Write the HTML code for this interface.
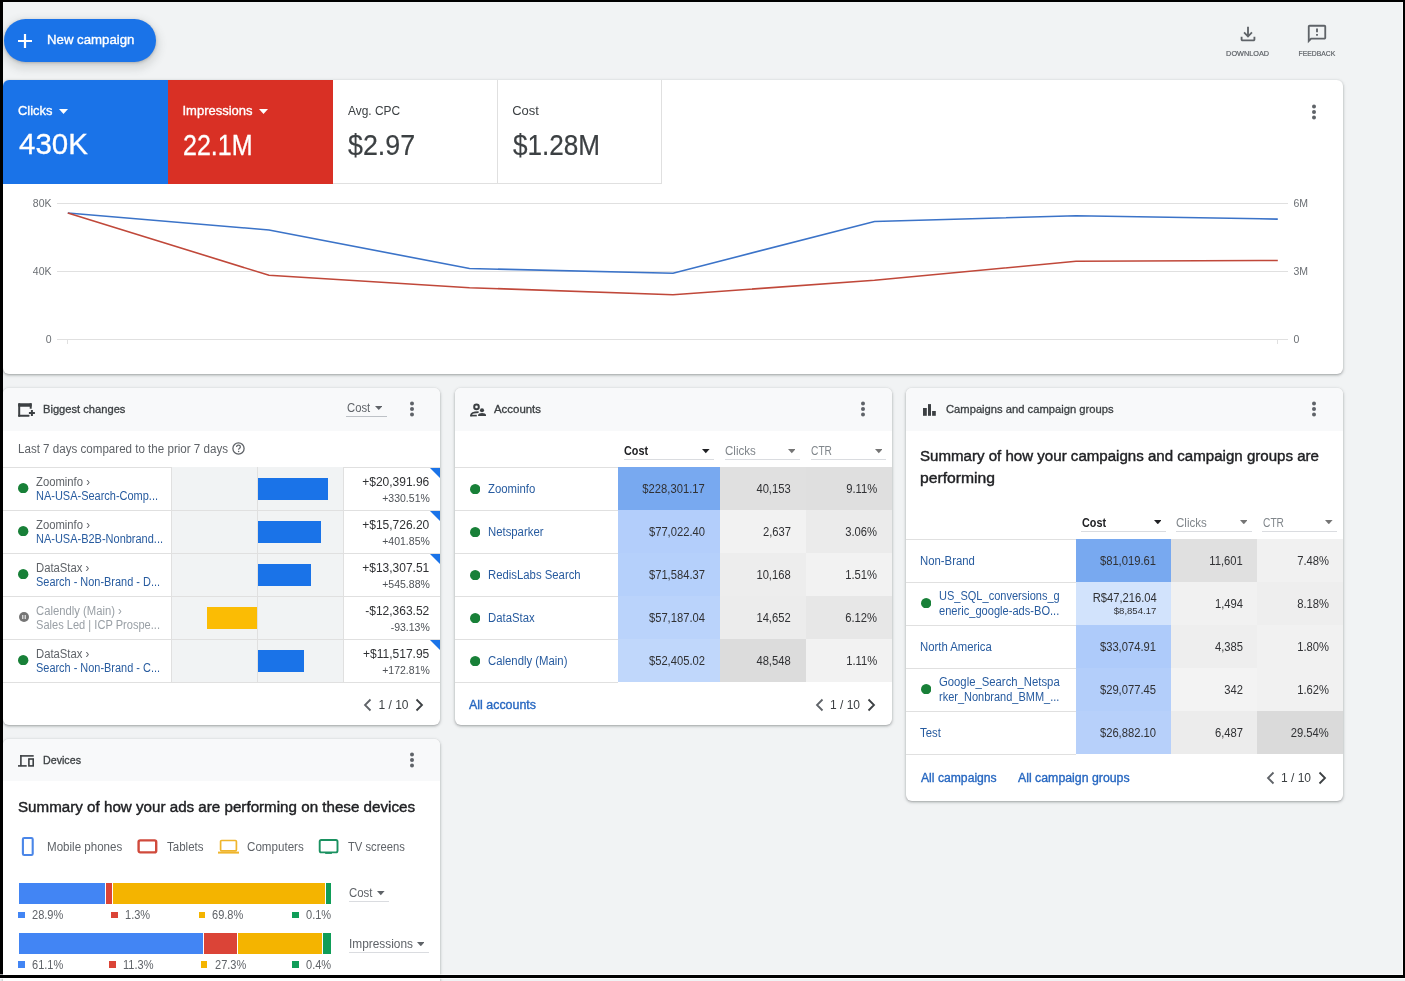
<!DOCTYPE html>
<html><head><meta charset="utf-8"><title>Overview</title>
<style>
html,body{margin:0;padding:0;}
body{width:1405px;height:981px;position:relative;overflow:hidden;background:#f1f3f4;font-family:"Liberation Sans",sans-serif;}
.t{position:absolute;white-space:nowrap;line-height:1.117;}
.b{position:absolute;}
</style></head><body><div style="position:absolute;left:0;top:0;width:1405px;height:981px;will-change:transform;">
<div class="b" style="left:4.00px;top:19.00px;width:152.00px;height:43.00px;background:#1a73e8;border-radius:22px;box-shadow:0 1px 3px 0 rgba(60,64,67,.3),0 4px 8px 3px rgba(60,64,67,.15);"></div>
<svg class="b" style="left:17.00px;top:33.00px" width="16" height="16" viewBox="0 0 16 16"><path d="M8 1v14M1 8h14" stroke="#fff" stroke-width="2.2" fill="none"/></svg>
<div class="t" style="top:33.03px;font-size:13.00px;color:#fff;font-weight:normal;-webkit-text-stroke:0.35px #fff;left:46.60px;transform:scaleX(1.0164);transform-origin:left;">New campaign</div>
<svg class="b" style="left:1236.80px;top:23.40px" width="22" height="22" viewBox="0 0 24 24"><path d="M18 15v3H6v-3H4v3c0 1.1.9 2 2 2h12c1.1 0 2-.9 2-2v-3h-2zm-1-4l-1.41-1.41L13 12.17V4h-2v8.17L8.41 9.59 7 11l5 5 5-5z" fill="#5f6368"/></svg>
<div class="t" style="top:50.46px;font-size:7.00px;color:#5f6368;font-weight:normal;-webkit-text-stroke:0.19px #5f6368;left:1226.89px;transform:scaleX(1.0431);transform-origin:center;">DOWNLOAD</div>
<svg class="b" style="left:1306.00px;top:23.00px" width="22" height="22" viewBox="0 0 24 24"><path d="M20 2H4c-1.1 0-1.99.9-1.99 2L2 22l4-4h14c1.1 0 2-.9 2-2V4c0-1.1-.9-2-2-2zm0 14H5.17L4 17.17V4h16v12zM11 12h2v2h-2zm0-6h2v4h-2z" fill="#5f6368"/></svg>
<div class="t" style="top:50.46px;font-size:7.00px;color:#5f6368;font-weight:normal;-webkit-text-stroke:0.19px #5f6368;left:1298.13px;transform:scaleX(0.9700);transform-origin:center;">FEEDBACK</div>
<div class="b" style="left:3.00px;top:80.00px;width:1340.00px;height:294.00px;background:#fff;border-radius:6px;box-shadow:0 1px 2px 0 rgba(60,64,67,.3),0 1px 3px 1px rgba(60,64,67,.15);"></div>
<div class="b" style="left:3.00px;top:80.00px;width:165.00px;height:104.00px;background:#1a73e8;border-top-left-radius:6px;"></div>
<div class="b" style="left:168.00px;top:80.00px;width:165.00px;height:104.00px;background:#d93025;"></div>
<div class="b" style="left:333.00px;top:80.00px;width:165.00px;height:104.00px;border-right:1px solid #e0e0e0;border-bottom:1px solid #e0e0e0;box-sizing:border-box;"></div>
<div class="b" style="left:497.00px;top:80.00px;width:165.00px;height:104.00px;border-right:1px solid #e0e0e0;border-bottom:1px solid #e0e0e0;box-sizing:border-box;"></div>
<div class="t" style="top:104.13px;font-size:13.00px;color:#fff;font-weight:normal;-webkit-text-stroke:0.35px #fff;left:17.90px;transform:scaleX(0.9923);transform-origin:left;">Clicks</div>
<svg class="b" style="left:59.00px;top:108.50px" width="9" height="5" viewBox="0 0 9 5"><path d="M0 0h9L4.5 5z" fill="#fff"/></svg>
<div class="t" style="top:128.46px;font-size:29.00px;color:#fff;font-weight:normal;left:19.00px;transform:scaleX(1.0158);transform-origin:left;-webkit-text-stroke:0.3px #fff;">430K</div>
<div class="t" style="top:104.13px;font-size:13.00px;color:#fff;font-weight:normal;-webkit-text-stroke:0.35px #fff;left:182.50px;">Impressions</div>
<svg class="b" style="left:259.00px;top:108.50px" width="9" height="5" viewBox="0 0 9 5"><path d="M0 0h9L4.5 5z" fill="#fff"/></svg>
<div class="t" style="top:128.66px;font-size:29.00px;color:#fff;font-weight:normal;left:182.90px;transform:scaleX(0.8635);transform-origin:left;-webkit-text-stroke:0.3px #fff;">22.1M</div>
<div class="t" style="top:104.23px;font-size:13.00px;color:#3c4043;font-weight:normal;left:347.70px;transform:scaleX(0.9184);transform-origin:left;">Avg. CPC</div>
<div class="t" style="top:128.66px;font-size:29.00px;color:#3c4043;font-weight:normal;left:347.70px;transform:scaleX(0.9246);transform-origin:left;-webkit-text-stroke:0.2px #3c4043;">$2.97</div>
<div class="t" style="top:104.23px;font-size:13.00px;color:#3c4043;font-weight:normal;left:512.20px;">Cost</div>
<div class="t" style="top:128.66px;font-size:29.00px;color:#3c4043;font-weight:normal;left:512.70px;transform:scaleX(0.9004);transform-origin:left;-webkit-text-stroke:0.2px #3c4043;">$1.28M</div>
<svg class="b" style="left:1311.00px;top:103.00px" width="6" height="18" viewBox="0 0 6 18"><circle cx="3" cy="3.6" r="2" fill="#5f6368"/><circle cx="3" cy="9" r="2" fill="#5f6368"/><circle cx="3" cy="14.4" r="2" fill="#5f6368"/></svg>
<div class="b" style="left:57.00px;top:203.00px;width:1231.00px;height:1.00px;background:#e0e0e0;"></div>
<div class="b" style="left:57.00px;top:271.00px;width:1231.00px;height:1.00px;background:#e0e0e0;"></div>
<div class="b" style="left:57.00px;top:339.00px;width:1231.00px;height:1.00px;background:#e0e0e0;"></div>
<div class="b" style="left:67.00px;top:339.00px;width:1.00px;height:5.00px;background:#e0e0e0;"></div>
<div class="b" style="left:1277.00px;top:339.00px;width:1.00px;height:5.00px;background:#e0e0e0;"></div>
<div class="t" style="top:198.10px;font-size:10.50px;color:#6b6f74;font-weight:normal;left:32.82px;">80K</div>
<div class="t" style="top:266.10px;font-size:10.50px;color:#6b6f74;font-weight:normal;left:32.82px;">40K</div>
<div class="t" style="top:334.10px;font-size:10.50px;color:#6b6f74;font-weight:normal;left:45.66px;">0</div>
<div class="t" style="top:198.10px;font-size:10.50px;color:#6b6f74;font-weight:normal;left:1293.50px;">6M</div>
<div class="t" style="top:266.10px;font-size:10.50px;color:#6b6f74;font-weight:normal;left:1293.50px;">3M</div>
<div class="t" style="top:334.10px;font-size:10.50px;color:#6b6f74;font-weight:normal;left:1293.50px;">0</div>
<svg class="b" style="left:0.00px;top:0.00px" width="1405" height="400" viewBox="0 0 1405 400"><polyline points="67.8,213.0 269.0,230.0 469.5,268.5 673.0,273.2 874.5,221.5 1076.0,215.7 1277.8,219.1" fill="none" stroke="#3b73c8" stroke-width="1.6"/><polyline points="67.8,212.9 269.0,275.3 469.5,287.7 673.0,294.7 874.5,280.3 1076.0,261.2 1277.8,260.5" fill="none" stroke="#c0483a" stroke-width="1.6"/></svg>
<div class="b" style="left:3.00px;top:388.00px;width:437.00px;height:336.60px;background:#fff;border-radius:6px;box-shadow:0 1px 2px 0 rgba(60,64,67,.3),0 1px 3px 1px rgba(60,64,67,.15);"></div>
<div class="b" style="left:3.00px;top:388.00px;width:437.00px;height:42.60px;background:#f8f9fa;border-top-left-radius:6px;border-top-right-radius:6px;"></div>
<svg class="b" style="left:17.00px;top:402.00px" width="20" height="18" viewBox="0 0 20 18"><g fill="#3c4043"><rect x="1.2" y="1.2" width="13.5" height="3.5" rx=".8"/><rect x="1.2" y="1.2" width="2" height="13.5" rx=".6"/><rect x="1.2" y="12.7" width="11.3" height="2" rx=".6"/><rect x="12.7" y="1.2" width="2" height="5.5"/><rect x="11.9" y="10" width="6" height="2"/><rect x="13.9" y="8" width="2" height="6"/></g></svg>
<div class="t" style="top:403.05px;font-size:11.00px;color:#3c4043;font-weight:normal;-webkit-text-stroke:0.30px #3c4043;left:43.40px;transform:scaleX(1.0131);transform-origin:left;">Biggest changes</div>
<div class="t" style="top:401.64px;font-size:12.00px;color:#5f6368;font-weight:normal;left:346.70px;transform:scaleX(0.9403);transform-origin:left;">Cost</div>
<svg class="b" style="left:374.50px;top:406.00px" width="7.5" height="4" viewBox="0 0 7.5 4"><path d="M0 0h7.5 L3.75 4z" fill="#5f6368"/></svg>
<div class="b" style="left:346.00px;top:416.00px;width:41.00px;height:1.00px;background:#bdc1c6;"></div>
<svg class="b" style="left:409.00px;top:400.20px" width="6" height="18" viewBox="0 0 6 18"><circle cx="3" cy="3.6" r="2" fill="#5f6368"/><circle cx="3" cy="9" r="2" fill="#5f6368"/><circle cx="3" cy="14.4" r="2" fill="#5f6368"/></svg>
<div class="t" style="top:442.54px;font-size:12.00px;color:#5f6368;font-weight:normal;left:17.60px;transform:scaleX(0.9657);transform-origin:left;">Last 7 days compared to the prior 7 days</div>
<svg class="b" style="left:232.00px;top:441.50px" width="13" height="13" viewBox="0 0 13 13"><circle cx="6.5" cy="6.5" r="5.6" stroke="#5f6368" stroke-width="1.3" fill="none"/><path d="M4.6 5.1c0-1.1.9-1.9 1.9-1.9s1.9.8 1.9 1.8c0 1.3-1.8 1.3-1.8 2.7" stroke="#5f6368" stroke-width="1.2" fill="none"/><circle cx="6.6" cy="9.6" r=".75" fill="#5f6368"/></svg>
<div class="b" style="left:3.00px;top:466.60px;width:437.00px;height:1.00px;background:#e0e0e0;"></div>
<div class="b" style="left:171.00px;top:467.00px;width:172.00px;height:215.00px;background:#f1f3f4;"></div>
<div class="b" style="left:3.00px;top:510.00px;width:437.00px;height:1.00px;background:#e0e0e0;"></div>
<div class="b" style="left:3.00px;top:553.00px;width:437.00px;height:1.00px;background:#e0e0e0;"></div>
<div class="b" style="left:3.00px;top:596.00px;width:437.00px;height:1.00px;background:#e0e0e0;"></div>
<div class="b" style="left:3.00px;top:639.00px;width:437.00px;height:1.00px;background:#e0e0e0;"></div>
<div class="b" style="left:3.00px;top:682.00px;width:437.00px;height:1.00px;background:#e0e0e0;"></div>
<svg class="b" style="left:18.40px;top:483.00px" width="10.4" height="10.4" viewBox="0 0 10.4 10.4"><circle cx="5.2" cy="5.2" r="5.2" fill="#188038"/></svg>
<div class="t" style="top:475.74px;font-size:12.00px;color:#5f6368;font-weight:normal;left:35.70px;transform:scaleX(0.9400);transform-origin:left;">Zoominfo ›</div>
<div class="t" style="top:489.94px;font-size:12.00px;color:#275b9f;font-weight:normal;left:35.70px;transform:scaleX(0.9147);transform-origin:left;">NA-USA-Search-Comp...</div>
<svg class="b" style="left:430.00px;top:468.00px" width="10" height="10" viewBox="0 0 10 10"><path d="M0 0h10v10z" fill="#1a73e8"/></svg>
<div class="b" style="left:258.00px;top:478.00px;width:70.00px;height:22.00px;background:#1a73e8;"></div>
<div class="t" style="top:475.94px;font-size:12.00px;color:#303134;font-weight:normal;left:362.23px;">+$20,391.96</div>
<div class="t" style="top:493.30px;font-size:10.50px;color:#4d5156;font-weight:normal;left:382.22px;">+330.51%</div>
<svg class="b" style="left:18.40px;top:526.00px" width="10.4" height="10.4" viewBox="0 0 10.4 10.4"><circle cx="5.2" cy="5.2" r="5.2" fill="#188038"/></svg>
<div class="t" style="top:518.74px;font-size:12.00px;color:#5f6368;font-weight:normal;left:35.70px;transform:scaleX(0.9400);transform-origin:left;">Zoominfo ›</div>
<div class="t" style="top:532.94px;font-size:12.00px;color:#275b9f;font-weight:normal;left:35.70px;transform:scaleX(0.9155);transform-origin:left;">NA-USA-B2B-Nonbrand...</div>
<svg class="b" style="left:430.00px;top:511.00px" width="10" height="10" viewBox="0 0 10 10"><path d="M0 0h10v10z" fill="#1a73e8"/></svg>
<div class="b" style="left:258.00px;top:521.00px;width:63.00px;height:22.00px;background:#1a73e8;"></div>
<div class="t" style="top:518.94px;font-size:12.00px;color:#303134;font-weight:normal;left:362.23px;">+$15,726.20</div>
<div class="t" style="top:536.30px;font-size:10.50px;color:#4d5156;font-weight:normal;left:382.22px;">+401.85%</div>
<svg class="b" style="left:18.40px;top:569.00px" width="10.4" height="10.4" viewBox="0 0 10.4 10.4"><circle cx="5.2" cy="5.2" r="5.2" fill="#188038"/></svg>
<div class="t" style="top:561.74px;font-size:12.00px;color:#5f6368;font-weight:normal;left:35.70px;transform:scaleX(0.9400);transform-origin:left;">DataStax ›</div>
<div class="t" style="top:575.94px;font-size:12.00px;color:#275b9f;font-weight:normal;left:35.70px;transform:scaleX(0.9114);transform-origin:left;">Search - Non-Brand - D...</div>
<svg class="b" style="left:430.00px;top:554.00px" width="10" height="10" viewBox="0 0 10 10"><path d="M0 0h10v10z" fill="#1a73e8"/></svg>
<div class="b" style="left:258.00px;top:564.00px;width:53.00px;height:22.00px;background:#1a73e8;"></div>
<div class="t" style="top:561.94px;font-size:12.00px;color:#303134;font-weight:normal;left:362.23px;">+$13,307.51</div>
<div class="t" style="top:579.30px;font-size:10.50px;color:#4d5156;font-weight:normal;left:382.22px;">+545.88%</div>
<svg class="b" style="left:18.50px;top:612.20px" width="10" height="10" viewBox="0 0 10 10"><circle cx="5" cy="5" r="5" fill="#757575"/><path d="M3.8 3v4M6.2 3v4" stroke="#fff" stroke-width="1"/></svg>
<div class="t" style="top:604.74px;font-size:12.00px;color:#9aa0a6;font-weight:normal;left:35.70px;transform:scaleX(0.9400);transform-origin:left;">Calendly (Main) ›</div>
<div class="t" style="top:618.94px;font-size:12.00px;color:#9aa0a6;font-weight:normal;left:35.70px;transform:scaleX(0.9233);transform-origin:left;">Sales Led | ICP Prospe...</div>
<div class="b" style="left:207.00px;top:607.00px;width:50.00px;height:22.00px;background:#fbbc04;"></div>
<div class="t" style="top:604.94px;font-size:12.00px;color:#303134;font-weight:normal;left:365.24px;">-$12,363.52</div>
<div class="t" style="top:622.30px;font-size:10.50px;color:#4d5156;font-weight:normal;left:390.69px;">-93.13%</div>
<svg class="b" style="left:18.40px;top:655.00px" width="10.4" height="10.4" viewBox="0 0 10.4 10.4"><circle cx="5.2" cy="5.2" r="5.2" fill="#188038"/></svg>
<div class="t" style="top:647.74px;font-size:12.00px;color:#5f6368;font-weight:normal;left:35.70px;transform:scaleX(0.9400);transform-origin:left;">DataStax ›</div>
<div class="t" style="top:661.94px;font-size:12.00px;color:#275b9f;font-weight:normal;left:35.70px;transform:scaleX(0.9114);transform-origin:left;">Search - Non-Brand - C...</div>
<svg class="b" style="left:430.00px;top:640.00px" width="10" height="10" viewBox="0 0 10 10"><path d="M0 0h10v10z" fill="#1a73e8"/></svg>
<div class="b" style="left:258.00px;top:650.00px;width:46.00px;height:22.00px;background:#1a73e8;"></div>
<div class="t" style="top:647.94px;font-size:12.00px;color:#303134;font-weight:normal;left:363.12px;">+$11,517.95</div>
<div class="t" style="top:665.30px;font-size:10.50px;color:#4d5156;font-weight:normal;left:382.22px;">+172.81%</div>
<div class="b" style="left:171.00px;top:467.00px;width:1.00px;height:215.00px;background:#e0e0e0;"></div>
<div class="b" style="left:257.00px;top:467.00px;width:1.00px;height:215.00px;background:#e0e0e0;"></div>
<div class="b" style="left:343.00px;top:467.00px;width:1.00px;height:215.00px;background:#e0e0e0;"></div>
<svg class="b" style="left:362.00px;top:698.00px" width="12" height="14" viewBox="0 0 12 14"><path d="M8.5 1.5L3 7l5.5 5.5" stroke="#5f6368" stroke-width="1.8" fill="none"/></svg>
<div class="t" style="top:699.24px;font-size:12.00px;color:#3c4043;font-weight:normal;left:378.50px;">1 / 10</div>
<svg class="b" style="left:413.00px;top:698.00px" width="12" height="14" viewBox="0 0 12 14"><path d="M3.5 1.5L9 7l-5.5 5.5" stroke="#3c4043" stroke-width="1.8" fill="none"/></svg>
<div class="b" style="left:455.00px;top:388.00px;width:437.00px;height:336.60px;background:#fff;border-radius:6px;box-shadow:0 1px 2px 0 rgba(60,64,67,.3),0 1px 3px 1px rgba(60,64,67,.15);"></div>
<div class="b" style="left:455.00px;top:388.00px;width:437.00px;height:42.60px;background:#f8f9fa;border-top-left-radius:6px;border-top-right-radius:6px;"></div>
<svg class="b" style="left:468.00px;top:401.00px" width="20" height="18" viewBox="0 0 20 18"><circle cx="8.5" cy="5.9" r="2.3" stroke="#3c4043" stroke-width="2" fill="none"/><path d="M3.2 15.3v-1.3c0-1.8 3.3-2.9 7.4-2.9" stroke="#3c4043" stroke-width="1.9" fill="none"/><path d="M2.2 14.6h6.6" stroke="#3c4043" stroke-width="1.6"/><circle cx="14" cy="9.3" r="2.05" fill="#3c4043"/><path d="M10.1 14.9v-1c0-.9 1.9-1.8 3.95-1.8s3.95.9 3.95 1.8v1z" fill="#3c4043"/></svg>
<div class="t" style="top:403.05px;font-size:11.00px;color:#3c4043;font-weight:normal;-webkit-text-stroke:0.30px #3c4043;left:494.20px;transform:scaleX(1.0387);transform-origin:left;">Accounts</div>
<svg class="b" style="left:860.20px;top:400.20px" width="6" height="18" viewBox="0 0 6 18"><circle cx="3" cy="3.6" r="2" fill="#5f6368"/><circle cx="3" cy="9" r="2" fill="#5f6368"/><circle cx="3" cy="14.4" r="2" fill="#5f6368"/></svg>
<div class="t" style="top:445.29px;font-size:12.50px;color:#202124;font-weight:bold;left:624.00px;transform:scaleX(0.8640);transform-origin:left;">Cost</div>
<svg class="b" style="left:702.00px;top:449.40px" width="7.6" height="4.3" viewBox="0 0 7.6 4.3"><path d="M0 0h7.6 L3.8 4.3z" fill="#202124"/></svg>
<div class="b" style="left:624.00px;top:459.30px;width:89.60px;height:1.00px;background:#dadce0;"></div>
<div class="t" style="top:445.29px;font-size:12.50px;color:#80868b;font-weight:normal;left:725.20px;transform:scaleX(0.9240);transform-origin:left;">Clicks</div>
<svg class="b" style="left:787.80px;top:449.40px" width="7.6" height="4.3" viewBox="0 0 7.6 4.3"><path d="M0 0h7.6 L3.8 4.3z" fill="#757575"/></svg>
<div class="b" style="left:725.20px;top:459.30px;width:74.50px;height:1.00px;background:#dadce0;"></div>
<div class="t" style="top:445.29px;font-size:12.50px;color:#80868b;font-weight:normal;left:811.30px;transform:scaleX(0.8174);transform-origin:left;">CTR</div>
<svg class="b" style="left:874.50px;top:449.40px" width="7.6" height="4.3" viewBox="0 0 7.6 4.3"><path d="M0 0h7.6 L3.8 4.3z" fill="#757575"/></svg>
<div class="b" style="left:810.90px;top:459.30px;width:75.10px;height:1.00px;background:#dadce0;"></div>
<div class="b" style="left:455.00px;top:466.60px;width:437.00px;height:1.00px;background:#e0e0e0;"></div>
<div class="b" style="left:618.30px;top:467.00px;width:101.70px;height:43.00px;background:#78a9f0;"></div>
<div class="b" style="left:720.00px;top:467.00px;width:85.80px;height:43.00px;background:#e0e0e0;"></div>
<div class="b" style="left:805.80px;top:467.00px;width:86.20px;height:43.00px;background:#dfdfdf;"></div>
<div class="b" style="left:455.00px;top:510.00px;width:163.30px;height:1.00px;background:#e0e0e0;"></div>
<svg class="b" style="left:469.90px;top:483.80px" width="10.4" height="10.4" viewBox="0 0 10.4 10.4"><circle cx="5.2" cy="5.2" r="5.2" fill="#188038"/></svg>
<div class="t" style="top:482.84px;font-size:12.00px;color:#275b9f;font-weight:normal;left:487.90px;transform:scaleX(0.9450);transform-origin:left;">Zoominfo</div>
<div class="t" style="top:482.84px;font-size:12.00px;color:#303134;font-weight:normal;left:638.27px;transform:scaleX(0.9350);transform-origin:right;">$228,301.17</div>
<div class="t" style="top:482.84px;font-size:12.00px;color:#303134;font-weight:normal;left:754.30px;transform:scaleX(0.9350);transform-origin:right;">40,153</div>
<div class="t" style="top:482.84px;font-size:12.00px;color:#303134;font-weight:normal;left:843.87px;transform:scaleX(0.9350);transform-origin:right;">9.11%</div>
<div class="b" style="left:618.30px;top:510.00px;width:101.70px;height:43.00px;background:#b3cefb;"></div>
<div class="b" style="left:720.00px;top:510.00px;width:85.80px;height:43.00px;background:#f2f2f2;"></div>
<div class="b" style="left:805.80px;top:510.00px;width:86.20px;height:43.00px;background:#ebebeb;"></div>
<div class="b" style="left:455.00px;top:553.00px;width:163.30px;height:1.00px;background:#e0e0e0;"></div>
<svg class="b" style="left:469.90px;top:526.80px" width="10.4" height="10.4" viewBox="0 0 10.4 10.4"><circle cx="5.2" cy="5.2" r="5.2" fill="#188038"/></svg>
<div class="t" style="top:525.84px;font-size:12.00px;color:#275b9f;font-weight:normal;left:487.90px;transform:scaleX(0.9450);transform-origin:left;">Netsparker</div>
<div class="t" style="top:525.84px;font-size:12.00px;color:#303134;font-weight:normal;left:644.94px;transform:scaleX(0.9350);transform-origin:right;">$77,022.40</div>
<div class="t" style="top:525.84px;font-size:12.00px;color:#303134;font-weight:normal;left:760.97px;transform:scaleX(0.9350);transform-origin:right;">2,637</div>
<div class="t" style="top:525.84px;font-size:12.00px;color:#303134;font-weight:normal;left:842.97px;transform:scaleX(0.9350);transform-origin:right;">3.06%</div>
<div class="b" style="left:618.30px;top:553.00px;width:101.70px;height:43.00px;background:#b5d0fb;"></div>
<div class="b" style="left:720.00px;top:553.00px;width:85.80px;height:43.00px;background:#ededed;"></div>
<div class="b" style="left:805.80px;top:553.00px;width:86.20px;height:43.00px;background:#f2f2f2;"></div>
<div class="b" style="left:455.00px;top:596.00px;width:163.30px;height:1.00px;background:#e0e0e0;"></div>
<svg class="b" style="left:469.90px;top:569.80px" width="10.4" height="10.4" viewBox="0 0 10.4 10.4"><circle cx="5.2" cy="5.2" r="5.2" fill="#188038"/></svg>
<div class="t" style="top:568.84px;font-size:12.00px;color:#275b9f;font-weight:normal;left:487.90px;transform:scaleX(0.9450);transform-origin:left;">RedisLabs Search</div>
<div class="t" style="top:568.84px;font-size:12.00px;color:#303134;font-weight:normal;left:644.94px;transform:scaleX(0.9350);transform-origin:right;">$71,584.37</div>
<div class="t" style="top:568.84px;font-size:12.00px;color:#303134;font-weight:normal;left:754.30px;transform:scaleX(0.9350);transform-origin:right;">10,168</div>
<div class="t" style="top:568.84px;font-size:12.00px;color:#303134;font-weight:normal;left:842.97px;transform:scaleX(0.9350);transform-origin:right;">1.51%</div>
<div class="b" style="left:618.30px;top:596.00px;width:101.70px;height:43.00px;background:#bad3fb;"></div>
<div class="b" style="left:720.00px;top:596.00px;width:85.80px;height:43.00px;background:#ececec;"></div>
<div class="b" style="left:805.80px;top:596.00px;width:86.20px;height:43.00px;background:#e7e7e7;"></div>
<div class="b" style="left:455.00px;top:639.00px;width:163.30px;height:1.00px;background:#e0e0e0;"></div>
<svg class="b" style="left:469.90px;top:612.80px" width="10.4" height="10.4" viewBox="0 0 10.4 10.4"><circle cx="5.2" cy="5.2" r="5.2" fill="#188038"/></svg>
<div class="t" style="top:611.84px;font-size:12.00px;color:#275b9f;font-weight:normal;left:487.90px;transform:scaleX(0.9450);transform-origin:left;">DataStax</div>
<div class="t" style="top:611.84px;font-size:12.00px;color:#303134;font-weight:normal;left:644.94px;transform:scaleX(0.9350);transform-origin:right;">$57,187.04</div>
<div class="t" style="top:611.84px;font-size:12.00px;color:#303134;font-weight:normal;left:754.30px;transform:scaleX(0.9350);transform-origin:right;">14,652</div>
<div class="t" style="top:611.84px;font-size:12.00px;color:#303134;font-weight:normal;left:842.97px;transform:scaleX(0.9350);transform-origin:right;">6.12%</div>
<div class="b" style="left:618.30px;top:639.00px;width:101.70px;height:43.00px;background:#c0d7fb;"></div>
<div class="b" style="left:720.00px;top:639.00px;width:85.80px;height:43.00px;background:#dcdcdc;"></div>
<div class="b" style="left:805.80px;top:639.00px;width:86.20px;height:43.00px;background:#f2f2f2;"></div>
<div class="b" style="left:455.00px;top:682.00px;width:163.30px;height:1.00px;background:#e0e0e0;"></div>
<svg class="b" style="left:469.90px;top:655.80px" width="10.4" height="10.4" viewBox="0 0 10.4 10.4"><circle cx="5.2" cy="5.2" r="5.2" fill="#188038"/></svg>
<div class="t" style="top:654.84px;font-size:12.00px;color:#275b9f;font-weight:normal;left:487.90px;transform:scaleX(0.9450);transform-origin:left;">Calendly (Main)</div>
<div class="t" style="top:654.84px;font-size:12.00px;color:#303134;font-weight:normal;left:644.94px;transform:scaleX(0.9350);transform-origin:right;">$52,405.02</div>
<div class="t" style="top:654.84px;font-size:12.00px;color:#303134;font-weight:normal;left:754.30px;transform:scaleX(0.9350);transform-origin:right;">48,548</div>
<div class="t" style="top:654.84px;font-size:12.00px;color:#303134;font-weight:normal;left:843.87px;transform:scaleX(0.9350);transform-origin:right;">1.11%</div>
<div class="t" style="top:699.09px;font-size:12.50px;color:#2566c0;font-weight:normal;-webkit-text-stroke:0.34px #2566c0;left:469.20px;transform:scaleX(0.9941);transform-origin:left;">All accounts</div>
<svg class="b" style="left:813.50px;top:698.00px" width="12" height="14" viewBox="0 0 12 14"><path d="M8.5 1.5L3 7l5.5 5.5" stroke="#5f6368" stroke-width="1.8" fill="none"/></svg>
<div class="t" style="top:699.24px;font-size:12.00px;color:#3c4043;font-weight:normal;left:830.00px;">1 / 10</div>
<svg class="b" style="left:864.50px;top:698.00px" width="12" height="14" viewBox="0 0 12 14"><path d="M3.5 1.5L9 7l-5.5 5.5" stroke="#3c4043" stroke-width="1.8" fill="none"/></svg>
<div class="b" style="left:906.00px;top:388.00px;width:437.00px;height:412.70px;background:#fff;border-radius:6px;box-shadow:0 1px 2px 0 rgba(60,64,67,.3),0 1px 3px 1px rgba(60,64,67,.15);"></div>
<div class="b" style="left:906.00px;top:388.00px;width:437.00px;height:42.60px;background:#f8f9fa;border-top-left-radius:6px;border-top-right-radius:6px;"></div>
<svg class="b" style="left:920.00px;top:401.00px" width="20" height="18" viewBox="0 0 20 18"><g fill="#3c4043"><rect x="3" y="7" width="3.8" height="7.8"/><rect x="8" y="3.1" width="3" height="11.7"/><rect x="12.1" y="10" width="3.7" height="4.8"/></g></svg>
<div class="t" style="top:403.05px;font-size:11.00px;color:#3c4043;font-weight:normal;-webkit-text-stroke:0.30px #3c4043;left:945.50px;transform:scaleX(1.0183);transform-origin:left;">Campaigns and campaign groups</div>
<svg class="b" style="left:1311.00px;top:400.20px" width="6" height="18" viewBox="0 0 6 18"><circle cx="3" cy="3.6" r="2" fill="#5f6368"/><circle cx="3" cy="9" r="2" fill="#5f6368"/><circle cx="3" cy="14.4" r="2" fill="#5f6368"/></svg>
<div class="t" style="top:449.33px;font-size:14.00px;color:#202124;font-weight:normal;-webkit-text-stroke:0.38px #202124;left:920.20px;transform:scaleX(1.0771);transform-origin:left;">Summary of how your campaigns and campaign groups are</div>
<div class="t" style="top:470.93px;font-size:14.00px;color:#202124;font-weight:normal;-webkit-text-stroke:0.38px #202124;left:920.20px;transform:scaleX(1.1207);transform-origin:left;">performing</div>
<div class="t" style="top:517.39px;font-size:12.50px;color:#202124;font-weight:bold;left:1081.60px;transform:scaleX(0.8640);transform-origin:left;">Cost</div>
<svg class="b" style="left:1153.50px;top:519.80px" width="7.6" height="4.3" viewBox="0 0 7.6 4.3"><path d="M0 0h7.6 L3.8 4.3z" fill="#202124"/></svg>
<div class="b" style="left:1081.00px;top:531.40px;width:85.00px;height:1.00px;background:#dadce0;"></div>
<div class="t" style="top:517.39px;font-size:12.50px;color:#80868b;font-weight:normal;left:1176.40px;transform:scaleX(0.9240);transform-origin:left;">Clicks</div>
<svg class="b" style="left:1239.50px;top:519.80px" width="7.6" height="4.3" viewBox="0 0 7.6 4.3"><path d="M0 0h7.6 L3.8 4.3z" fill="#757575"/></svg>
<div class="b" style="left:1176.00px;top:531.40px;width:75.70px;height:1.00px;background:#dadce0;"></div>
<div class="t" style="top:517.39px;font-size:12.50px;color:#80868b;font-weight:normal;left:1262.60px;transform:scaleX(0.8174);transform-origin:left;">CTR</div>
<svg class="b" style="left:1325.30px;top:519.80px" width="7.6" height="4.3" viewBox="0 0 7.6 4.3"><path d="M0 0h7.6 L3.8 4.3z" fill="#757575"/></svg>
<div class="b" style="left:1262.00px;top:531.40px;width:75.00px;height:1.00px;background:#dadce0;"></div>
<div class="b" style="left:906.00px;top:538.60px;width:437.00px;height:1.00px;background:#e0e0e0;"></div>
<div class="b" style="left:1076.20px;top:539.00px;width:94.80px;height:43.00px;background:#78a9f0;"></div>
<div class="b" style="left:1171.00px;top:539.00px;width:86.00px;height:43.00px;background:#e0e0e0;"></div>
<div class="b" style="left:1257.00px;top:539.00px;width:86.00px;height:43.00px;background:#f1f1f1;"></div>
<div class="b" style="left:906.00px;top:582.00px;width:170.20px;height:1.00px;background:#e0e0e0;"></div>
<div class="t" style="top:554.84px;font-size:12.00px;color:#275b9f;font-weight:normal;left:920.20px;transform:scaleX(0.9450);transform-origin:left;">Non-Brand</div>
<div class="t" style="top:554.84px;font-size:12.00px;color:#303134;font-weight:normal;left:1096.14px;transform:scaleX(0.9350);transform-origin:right;">$81,019.61</div>
<div class="t" style="top:554.84px;font-size:12.00px;color:#303134;font-weight:normal;left:1206.89px;transform:scaleX(0.9350);transform-origin:right;">11,601</div>
<div class="t" style="top:554.84px;font-size:12.00px;color:#303134;font-weight:normal;left:1294.57px;transform:scaleX(0.9350);transform-origin:right;">7.48%</div>
<div class="b" style="left:1076.20px;top:582.00px;width:94.80px;height:43.00px;background:#d2e3fc;"></div>
<div class="b" style="left:1171.00px;top:582.00px;width:86.00px;height:43.00px;background:#f1f1f1;"></div>
<div class="b" style="left:1257.00px;top:582.00px;width:86.00px;height:43.00px;background:#eeeeee;"></div>
<div class="b" style="left:906.00px;top:625.00px;width:170.20px;height:1.00px;background:#e0e0e0;"></div>
<svg class="b" style="left:921.10px;top:597.80px" width="10.4" height="10.4" viewBox="0 0 10.4 10.4"><circle cx="5.2" cy="5.2" r="5.2" fill="#188038"/></svg>
<div class="t" style="top:590.14px;font-size:12.00px;color:#275b9f;font-weight:normal;left:939.20px;transform:scaleX(0.9185);transform-origin:left;">US_SQL_conversions_g</div>
<div class="t" style="top:605.44px;font-size:12.00px;color:#275b9f;font-weight:normal;left:939.20px;transform:scaleX(0.9248);transform-origin:left;">eneric_google-ads-BO...</div>
<div class="t" style="top:591.84px;font-size:12.00px;color:#303134;font-weight:normal;left:1087.77px;transform:scaleX(0.9312);transform-origin:right;">R$47,216.04</div>
<div class="t" style="top:605.90px;font-size:9.50px;color:#303134;font-weight:normal;left:1114.24px;transform:scaleX(1.0056);transform-origin:right;">$8,854.17</div>
<div class="t" style="top:597.84px;font-size:12.00px;color:#303134;font-weight:normal;left:1212.67px;transform:scaleX(0.9350);transform-origin:right;">1,494</div>
<div class="t" style="top:597.84px;font-size:12.00px;color:#303134;font-weight:normal;left:1294.57px;transform:scaleX(0.9350);transform-origin:right;">8.18%</div>
<div class="b" style="left:1076.20px;top:625.00px;width:94.80px;height:43.00px;background:#aecbfa;"></div>
<div class="b" style="left:1171.00px;top:625.00px;width:86.00px;height:43.00px;background:#eeeeee;"></div>
<div class="b" style="left:1257.00px;top:625.00px;width:86.00px;height:43.00px;background:#f1f1f1;"></div>
<div class="b" style="left:906.00px;top:668.00px;width:170.20px;height:1.00px;background:#e0e0e0;"></div>
<div class="t" style="top:640.84px;font-size:12.00px;color:#275b9f;font-weight:normal;left:920.20px;transform:scaleX(0.9450);transform-origin:left;">North America</div>
<div class="t" style="top:640.84px;font-size:12.00px;color:#303134;font-weight:normal;left:1096.14px;transform:scaleX(0.9350);transform-origin:right;">$33,074.91</div>
<div class="t" style="top:640.84px;font-size:12.00px;color:#303134;font-weight:normal;left:1212.67px;transform:scaleX(0.9350);transform-origin:right;">4,385</div>
<div class="t" style="top:640.84px;font-size:12.00px;color:#303134;font-weight:normal;left:1294.57px;transform:scaleX(0.9350);transform-origin:right;">1.80%</div>
<div class="b" style="left:1076.20px;top:668.00px;width:94.80px;height:43.00px;background:#b3cefa;"></div>
<div class="b" style="left:1171.00px;top:668.00px;width:86.00px;height:43.00px;background:#f3f3f3;"></div>
<div class="b" style="left:1257.00px;top:668.00px;width:86.00px;height:43.00px;background:#f1f1f1;"></div>
<div class="b" style="left:906.00px;top:711.00px;width:170.20px;height:1.00px;background:#e0e0e0;"></div>
<svg class="b" style="left:921.10px;top:683.80px" width="10.4" height="10.4" viewBox="0 0 10.4 10.4"><circle cx="5.2" cy="5.2" r="5.2" fill="#188038"/></svg>
<div class="t" style="top:676.14px;font-size:12.00px;color:#275b9f;font-weight:normal;left:939.20px;transform:scaleX(0.9423);transform-origin:left;">Google_Search_Netspa</div>
<div class="t" style="top:691.44px;font-size:12.00px;color:#275b9f;font-weight:normal;left:939.20px;transform:scaleX(0.9156);transform-origin:left;">rker_Nonbrand_BMM_...</div>
<div class="t" style="top:683.84px;font-size:12.00px;color:#303134;font-weight:normal;left:1096.14px;transform:scaleX(0.9350);transform-origin:right;">$29,077.45</div>
<div class="t" style="top:683.84px;font-size:12.00px;color:#303134;font-weight:normal;left:1222.68px;transform:scaleX(0.9350);transform-origin:right;">342</div>
<div class="t" style="top:683.84px;font-size:12.00px;color:#303134;font-weight:normal;left:1294.57px;transform:scaleX(0.9350);transform-origin:right;">1.62%</div>
<div class="b" style="left:1076.20px;top:711.00px;width:94.80px;height:43.00px;background:#b7d0fa;"></div>
<div class="b" style="left:1171.00px;top:711.00px;width:86.00px;height:43.00px;background:#ececec;"></div>
<div class="b" style="left:1257.00px;top:711.00px;width:86.00px;height:43.00px;background:#dadada;"></div>
<div class="b" style="left:906.00px;top:754.00px;width:170.20px;height:1.00px;background:#e0e0e0;"></div>
<div class="t" style="top:726.84px;font-size:12.00px;color:#275b9f;font-weight:normal;left:920.20px;transform:scaleX(0.9450);transform-origin:left;">Test</div>
<div class="t" style="top:726.84px;font-size:12.00px;color:#303134;font-weight:normal;left:1096.14px;transform:scaleX(0.9350);transform-origin:right;">$26,882.10</div>
<div class="t" style="top:726.84px;font-size:12.00px;color:#303134;font-weight:normal;left:1212.67px;transform:scaleX(0.9350);transform-origin:right;">6,487</div>
<div class="t" style="top:726.84px;font-size:12.00px;color:#303134;font-weight:normal;left:1287.90px;transform:scaleX(0.9350);transform-origin:right;">29.54%</div>
<div class="t" style="top:771.59px;font-size:12.50px;color:#2566c0;font-weight:normal;-webkit-text-stroke:0.34px #2566c0;left:921.10px;transform:scaleX(0.9728);transform-origin:left;">All campaigns</div>
<div class="t" style="top:771.59px;font-size:12.50px;color:#2566c0;font-weight:normal;-webkit-text-stroke:0.34px #2566c0;left:1017.70px;transform:scaleX(0.9853);transform-origin:left;">All campaign groups</div>
<svg class="b" style="left:1264.50px;top:770.50px" width="12" height="14" viewBox="0 0 12 14"><path d="M8.5 1.5L3 7l5.5 5.5" stroke="#5f6368" stroke-width="1.8" fill="none"/></svg>
<div class="t" style="top:771.74px;font-size:12.00px;color:#3c4043;font-weight:normal;left:1281.00px;">1 / 10</div>
<svg class="b" style="left:1315.50px;top:770.50px" width="12" height="14" viewBox="0 0 12 14"><path d="M3.5 1.5L9 7l-5.5 5.5" stroke="#3c4043" stroke-width="1.8" fill="none"/></svg>
<div class="b" style="left:3.00px;top:738.60px;width:437.00px;height:261.40px;background:#fff;border-radius:6px;box-shadow:0 1px 2px 0 rgba(60,64,67,.3),0 1px 3px 1px rgba(60,64,67,.15);"></div>
<div class="b" style="left:3.00px;top:738.60px;width:437.00px;height:42.90px;background:#f8f9fa;border-top-left-radius:6px;border-top-right-radius:6px;"></div>
<svg class="b" style="left:17.00px;top:753.00px" width="20" height="16" viewBox="0 0 20 16"><g fill="#3c4043"><rect x="3.1" y="2.1" width="13.6" height="1.6"/><rect x="3.1" y="2.1" width="1.6" height="11"/><rect x="1" y="12.1" width="8.7" height="1.6"/><rect x="11.1" y="5.2" width="5.9" height="8.5"/></g><rect x="12.7" y="6.8" width="2.7" height="5.3" fill="#f8f9fa"/></svg>
<div class="t" style="top:754.24px;font-size:11.00px;color:#3c4043;font-weight:normal;-webkit-text-stroke:0.30px #3c4043;left:43.20px;transform:scaleX(0.9713);transform-origin:left;">Devices</div>
<svg class="b" style="left:409.00px;top:751.20px" width="6" height="18" viewBox="0 0 6 18"><circle cx="3" cy="3.6" r="2" fill="#5f6368"/><circle cx="3" cy="9" r="2" fill="#5f6368"/><circle cx="3" cy="14.4" r="2" fill="#5f6368"/></svg>
<div class="t" style="top:800.23px;font-size:14.00px;color:#202124;font-weight:normal;-webkit-text-stroke:0.38px #202124;left:17.80px;transform:scaleX(1.0832);transform-origin:left;">Summary of how your ads are performing on these devices</div>
<svg class="b" style="left:21.00px;top:836.00px" width="14" height="21" viewBox="0 0 14 21"><rect x="1.9" y="2" width="9.8" height="17" rx="1.3" stroke="#4a86e8" stroke-width="2.1" fill="none"/></svg>
<div class="t" style="top:840.89px;font-size:12.50px;color:#5f6368;font-weight:normal;left:46.70px;transform:scaleX(0.9249);transform-origin:left;">Mobile phones</div>
<svg class="b" style="left:136.00px;top:838.00px" width="23" height="17" viewBox="0 0 23 17"><rect x="2.6" y="2.4" width="17.6" height="12" rx="1.6" stroke="#d04a3c" stroke-width="2.4" fill="none"/></svg>
<div class="t" style="top:840.89px;font-size:12.50px;color:#5f6368;font-weight:normal;left:166.80px;transform:scaleX(0.9216);transform-origin:left;">Tablets</div>
<svg class="b" style="left:217.00px;top:838.00px" width="23" height="17" viewBox="0 0 23 17"><rect x="3.6" y="2.5" width="15.8" height="10.3" rx="1" stroke="#efb52c" stroke-width="1.7" fill="none"/><rect x="1" y="13.6" width="21" height="2" fill="#efb52c"/></svg>
<div class="t" style="top:840.89px;font-size:12.50px;color:#5f6368;font-weight:normal;left:246.60px;transform:scaleX(0.9291);transform-origin:left;">Computers</div>
<svg class="b" style="left:317.00px;top:838.00px" width="23" height="17" viewBox="0 0 23 17"><rect x="2.7" y="2" width="17.8" height="12.4" rx="1.6" stroke="#1a9160" stroke-width="1.9" fill="none"/><rect x="8.2" y="14" width="6.7" height="1.9" fill="#1a9160"/></svg>
<div class="t" style="top:840.89px;font-size:12.50px;color:#5f6368;font-weight:normal;left:347.50px;transform:scaleX(0.8985);transform-origin:left;">TV screens</div>
<div class="b" style="left:19.20px;top:883.00px;width:85.60px;height:21.00px;background:#4285f4;"></div>
<div class="b" style="left:106.00px;top:883.00px;width:6.00px;height:21.00px;background:#db4437;"></div>
<div class="b" style="left:113.00px;top:883.00px;width:211.90px;height:21.00px;background:#f4b400;"></div>
<div class="b" style="left:325.80px;top:883.00px;width:5.20px;height:21.00px;background:#0f9d58;"></div>
<div class="b" style="left:19.20px;top:933.00px;width:183.70px;height:21.00px;background:#4285f4;"></div>
<div class="b" style="left:204.00px;top:933.00px;width:32.80px;height:21.00px;background:#db4437;"></div>
<div class="b" style="left:238.00px;top:933.00px;width:83.80px;height:21.00px;background:#f4b400;"></div>
<div class="b" style="left:322.90px;top:933.00px;width:8.10px;height:21.00px;background:#0f9d58;"></div>
<div class="b" style="left:18.30px;top:911.70px;width:6.50px;height:6.50px;background:#4285f4;"></div>
<div class="t" style="top:909.14px;font-size:12.00px;color:#5f6368;font-weight:normal;left:32.00px;transform:scaleX(0.9200);transform-origin:left;">28.9%</div>
<div class="b" style="left:111.00px;top:911.70px;width:6.50px;height:6.50px;background:#db4437;"></div>
<div class="t" style="top:909.14px;font-size:12.00px;color:#5f6368;font-weight:normal;left:124.70px;transform:scaleX(0.9200);transform-origin:left;">1.3%</div>
<div class="b" style="left:198.60px;top:911.70px;width:6.50px;height:6.50px;background:#f4b400;"></div>
<div class="t" style="top:909.14px;font-size:12.00px;color:#5f6368;font-weight:normal;left:212.30px;transform:scaleX(0.9200);transform-origin:left;">69.8%</div>
<div class="b" style="left:292.40px;top:911.70px;width:6.50px;height:6.50px;background:#0f9d58;"></div>
<div class="t" style="top:909.14px;font-size:12.00px;color:#5f6368;font-weight:normal;left:306.10px;transform:scaleX(0.9200);transform-origin:left;">0.1%</div>
<div class="b" style="left:18.30px;top:961.10px;width:6.50px;height:6.50px;background:#4285f4;"></div>
<div class="t" style="top:958.54px;font-size:12.00px;color:#5f6368;font-weight:normal;left:32.00px;transform:scaleX(0.9200);transform-origin:left;">61.1%</div>
<div class="b" style="left:109.00px;top:961.10px;width:6.50px;height:6.50px;background:#db4437;"></div>
<div class="t" style="top:958.54px;font-size:12.00px;color:#5f6368;font-weight:normal;left:122.70px;transform:scaleX(0.9200);transform-origin:left;">11.3%</div>
<div class="b" style="left:200.80px;top:961.10px;width:6.50px;height:6.50px;background:#f4b400;"></div>
<div class="t" style="top:958.54px;font-size:12.00px;color:#5f6368;font-weight:normal;left:214.50px;transform:scaleX(0.9200);transform-origin:left;">27.3%</div>
<div class="b" style="left:292.40px;top:961.10px;width:6.50px;height:6.50px;background:#0f9d58;"></div>
<div class="t" style="top:958.54px;font-size:12.00px;color:#5f6368;font-weight:normal;left:306.10px;transform:scaleX(0.9200);transform-origin:left;">0.4%</div>
<div class="t" style="top:887.29px;font-size:12.50px;color:#5f6368;font-weight:normal;left:349.00px;transform:scaleX(0.9143);transform-origin:left;">Cost</div>
<svg class="b" style="left:377.00px;top:891.30px" width="7.6" height="4.3" viewBox="0 0 7.6 4.3"><path d="M0 0h7.6 L3.8 4.3z" fill="#5f6368"/></svg>
<div class="b" style="left:349.00px;top:901.00px;width:39.50px;height:1.00px;background:#dadce0;"></div>
<div class="t" style="top:937.79px;font-size:12.50px;color:#5f6368;font-weight:normal;left:349.00px;transform:scaleX(0.9498);transform-origin:left;">Impressions</div>
<svg class="b" style="left:416.50px;top:942.00px" width="7.6" height="4.3" viewBox="0 0 7.6 4.3"><path d="M0 0h7.6 L3.8 4.3z" fill="#5f6368"/></svg>
<div class="b" style="left:349.00px;top:952.20px;width:79.60px;height:1.00px;background:#dadce0;"></div>
<div class="b" style="left:0.00px;top:0.00px;width:1405.00px;height:2.00px;background:#000;"></div>
<div class="b" style="left:0.00px;top:0.00px;width:3.00px;height:978.00px;background:#000;"></div>
<div class="b" style="left:1403.00px;top:0.00px;width:2.00px;height:978.00px;background:#000;"></div>
<div class="b" style="left:0.00px;top:975.00px;width:1405.00px;height:3.00px;background:#000;"></div>
<div class="b" style="left:0.00px;top:978.00px;width:1405.00px;height:1.00px;background:rgba(255,255,255,.8);"></div>
<div class="b" style="left:0.00px;top:974.00px;width:1403.00px;height:1.00px;background:rgba(255,255,255,.6);"></div>
<div class="b" style="left:1402.00px;top:2.00px;width:1.00px;height:973.00px;background:rgba(255,255,255,.6);"></div>
</div></body></html>
